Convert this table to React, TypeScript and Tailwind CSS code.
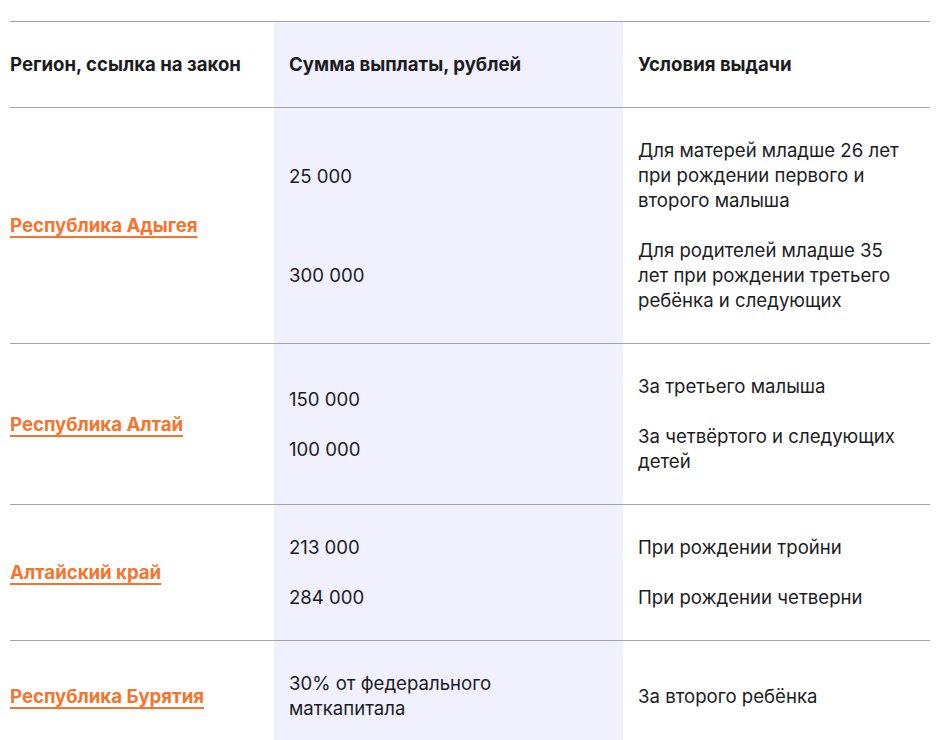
import React from "react";

type Row = {
  region: string;
  sums: React.ReactNode[];
  sumGap: string;
  conds: React.ReactNode[];
};

const rows: Row[] = [
  {
    region: "Республика Адыгея",
    sums: ["25 000", "300 000"],
    sumGap: "gap-[74px]",
    conds: [
      <>Для матерей младше 26 лет<br />при рождении первого и<br />второго малыша</>,
      <>Для родителей младше 35<br />лет при рождении третьего<br />ребёнка и следующих</>,
    ],
  },
  {
    region: "Республика Алтай",
    sums: ["150 000", "100 000"],
    sumGap: "gap-[25px]",
    conds: ["За третьего малыша", <>За четвёртого и следующих<br />детей</>],
  },
  {
    region: "Алтайский край",
    sums: ["213 000", "284 000"],
    sumGap: "gap-[25px]",
    conds: ["При рождении тройни", "При рождении четверни"],
  },
  {
    region: "Республика Бурятия",
    sums: [<>30% от федерального<br />маткапитала</>],
    sumGap: "gap-[25px]",
    conds: ["За второго ребёнка"],
  },
];

export default function App() {
  return (
    <div
      className="bg-white min-h-screen pt-[21px] px-[10px] text-[#1c1c1e] text-[18.6px] leading-[25px]"
      style={{ fontFamily: 'Inter, "Noto Sans", sans-serif' }}
    >
      <div className="w-[920px]">
        <div className="grid grid-cols-[264px_349px_307px] border-t border-[#a3a3a3]">
          <div className="py-[30px] font-bold">Регион, ссылка на закон</div>
          <div className="py-[30px] px-[15px] bg-[#f0f0ff] font-bold">Сумма выплаты, рублей</div>
          <div className="py-[30px] px-[15px] font-bold">Условия выдачи</div>
        </div>
        {rows.map((r) => (
          <div key={r.region} className="grid grid-cols-[264px_349px_307px] border-t border-[#a3a3a3]">
            <div className="py-[30px] flex items-center">
              <a
                href="#"
                className="text-[#f5752e] font-bold underline decoration-2 underline-offset-[4px]"
              >
                {r.region}
              </a>
            </div>
            <div className={`py-[30px] px-[15px] bg-[#f0f0ff] flex flex-col justify-center ${r.sumGap}`}>
              {r.sums.map((s, i) => (
                <div key={i}>{s}</div>
              ))}
            </div>
            <div className="py-[30px] px-[15px] flex flex-col justify-center gap-[25px]">
              {r.conds.map((c, i) => (
                <div key={i}>{c}</div>
              ))}
            </div>
          </div>
        ))}
      </div>
    </div>
  );
}
